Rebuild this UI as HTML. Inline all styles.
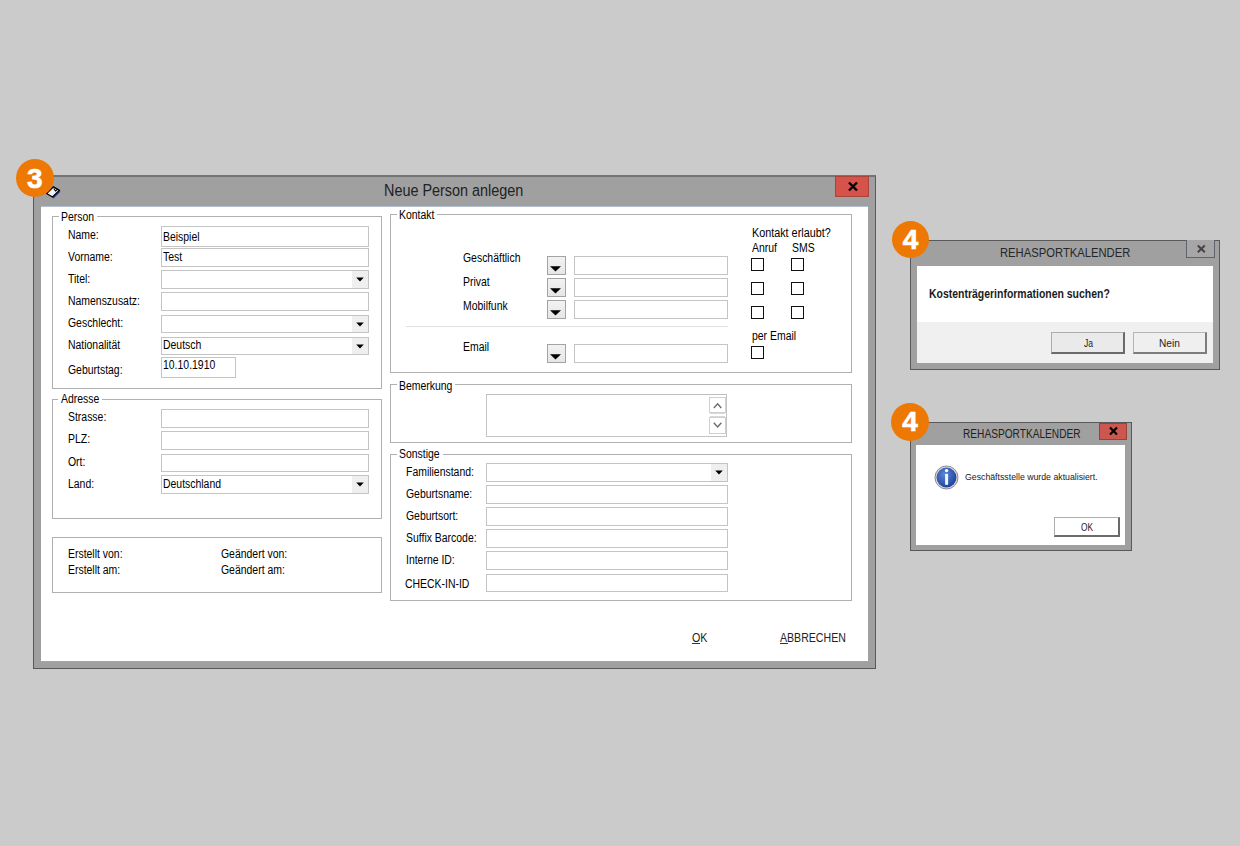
<!DOCTYPE html>
<html><head><meta charset="utf-8"><style>
html,body{margin:0;padding:0;}
body{width:1240px;height:846px;position:relative;overflow:hidden;background:#cbcbcb;font-family:"Liberation Sans", sans-serif;}
</style></head><body>
<div style="position:absolute;left:33px;top:175px;width:843px;height:494px;background:#a0a0a0;border:1px solid #595959;border-top:2px solid #747474;box-sizing:border-box;"></div>
<div style="position:absolute;left:41px;top:207px;width:827px;height:454px;background:#fff;"></div>
<div style="position:absolute;left:41px;top:206px;width:827px;height:1px;background:#b3bfcc;"></div>
<div style="position:absolute;left:41px;top:661px;width:827px;height:1px;background:#9aa6b2;"></div>
<div style="position:absolute;left:383.8px;top:183.26px;font-size:16px;line-height:16px;color:#222;font-weight:normal;white-space:nowrap;transform:scaleX(0.9);transform-origin:0 0;">Neue Person anlegen</div>
<div style="position:absolute;left:835px;top:176px;width:34px;height:21px;background:#d5534a;border:1px solid #a8443c;box-sizing:border-box;"></div>
<svg style="position:absolute;left:847px;top:181px" width="12" height="11"><path d="M2 1.5 L10 9.5 M10 1.5 L2 9.5" stroke="#000" stroke-width="2.4"/></svg>
<svg style="position:absolute;left:44px;top:184px" width="18" height="16"><path d="M2.5 9.5 L9.5 2.8 L15.5 6.3 L8.5 13 Z" fill="#f2f2f2" stroke="#000" stroke-width="1.4" stroke-linejoin="round"/><path d="M9.8 4.5 L11.5 7 L14 5" fill="none" stroke="#000" stroke-width="1.2"/><path d="M9 14 L16 7.3" stroke="#1c2c80" stroke-width="1.1"/></svg>
<div style="position:absolute;left:52px;top:216px;width:330px;height:173px;border:1px solid #b0b0b0;box-sizing:border-box;"></div>
<div style="position:absolute;left:58.7px;top:215px;width:38.5861px;height:3px;background:#fff;"></div>
<div style="position:absolute;left:61.2px;top:210.74px;font-size:12px;line-height:12px;color:#000;font-weight:normal;white-space:nowrap;transform:scaleX(0.87);transform-origin:0 0;">Person</div>
<div style="position:absolute;left:68px;top:228.64px;font-size:12px;line-height:12px;color:#000;font-weight:normal;white-space:nowrap;transform:scaleX(0.87);transform-origin:0 0;">Name:</div>
<div style="position:absolute;left:160.5px;top:226px;width:208.5px;height:20.5px;border:1px solid #c4c4c4;box-sizing:border-box;background:#fff;"></div>
<div style="position:absolute;left:162.5px;top:230.84px;font-size:12px;line-height:12px;color:#000;font-weight:normal;white-space:nowrap;transform:scaleX(0.87);transform-origin:0 0;">Beispiel</div>
<div style="position:absolute;left:68px;top:250.54px;font-size:12px;line-height:12px;color:#000;font-weight:normal;white-space:nowrap;transform:scaleX(0.87);transform-origin:0 0;">Vorname:</div>
<div style="position:absolute;left:160.5px;top:248.2px;width:208.5px;height:18.600000000000023px;border:1px solid #c4c4c4;box-sizing:border-box;background:#fff;"></div>
<div style="position:absolute;left:162.5px;top:250.54px;font-size:12px;line-height:12px;color:#000;font-weight:normal;white-space:nowrap;transform:scaleX(0.87);transform-origin:0 0;">Test</div>
<div style="position:absolute;left:68px;top:272.54px;font-size:12px;line-height:12px;color:#000;font-weight:normal;white-space:nowrap;transform:scaleX(0.87);transform-origin:0 0;">Titel:</div>
<div style="position:absolute;left:160.5px;top:270.2px;width:208.5px;height:18.600000000000023px;border:1px solid #c4c4c4;box-sizing:border-box;background:#fff;"></div>
<div style="position:absolute;left:352px;top:271.2px;width:16px;height:16.600000000000023px;background:#efefef;"></div>
<svg style="position:absolute;left:354.7px;top:277.1px" width="10" height="6"><path d="M1.2 0.4 L8.8 0.4 L5 4.6 Z" fill="#000"/></svg>
<div style="position:absolute;left:68px;top:294.64px;font-size:12px;line-height:12px;color:#000;font-weight:normal;white-space:nowrap;transform:scaleX(0.87);transform-origin:0 0;">Namenszusatz:</div>
<div style="position:absolute;left:160.5px;top:292.3px;width:208.5px;height:18.600000000000023px;border:1px solid #c4c4c4;box-sizing:border-box;background:#fff;"></div>
<div style="position:absolute;left:68px;top:316.94px;font-size:12px;line-height:12px;color:#000;font-weight:normal;white-space:nowrap;transform:scaleX(0.87);transform-origin:0 0;">Geschlecht:</div>
<div style="position:absolute;left:160.5px;top:314.6px;width:208.5px;height:18.600000000000023px;border:1px solid #c4c4c4;box-sizing:border-box;background:#fff;"></div>
<div style="position:absolute;left:352px;top:315.6px;width:16px;height:16.600000000000023px;background:#efefef;"></div>
<svg style="position:absolute;left:354.7px;top:321.50000000000006px" width="10" height="6"><path d="M1.2 0.4 L8.8 0.4 L5 4.6 Z" fill="#000"/></svg>
<div style="position:absolute;left:68px;top:338.94px;font-size:12px;line-height:12px;color:#000;font-weight:normal;white-space:nowrap;transform:scaleX(0.87);transform-origin:0 0;">Nationalität</div>
<div style="position:absolute;left:160.5px;top:336.6px;width:208.5px;height:18.600000000000023px;border:1px solid #c4c4c4;box-sizing:border-box;background:#fff;"></div>
<div style="position:absolute;left:352px;top:337.6px;width:16px;height:16.600000000000023px;background:#efefef;"></div>
<svg style="position:absolute;left:354.7px;top:343.50000000000006px" width="10" height="6"><path d="M1.2 0.4 L8.8 0.4 L5 4.6 Z" fill="#000"/></svg>
<div style="position:absolute;left:162.5px;top:338.94px;font-size:12px;line-height:12px;color:#000;font-weight:normal;white-space:nowrap;transform:scaleX(0.87);transform-origin:0 0;">Deutsch</div>
<div style="position:absolute;left:68px;top:363.84px;font-size:12px;line-height:12px;color:#000;font-weight:normal;white-space:nowrap;transform:scaleX(0.87);transform-origin:0 0;">Geburtstag:</div>
<div style="position:absolute;left:160.5px;top:357px;width:75px;height:21px;border:1px solid #c4c4c4;box-sizing:border-box;"></div>
<div style="position:absolute;left:162.5px;top:358.84px;font-size:12px;line-height:12px;color:#000;font-weight:normal;white-space:nowrap;transform:scaleX(0.87);transform-origin:0 0;">10.10.1910</div>
<div style="position:absolute;left:52px;top:398.5px;width:330px;height:120.5px;border:1px solid #b0b0b0;box-sizing:border-box;"></div>
<div style="position:absolute;left:58.3px;top:397.5px;width:43.8061px;height:3px;background:#fff;"></div>
<div style="position:absolute;left:60.8px;top:393.24px;font-size:12px;line-height:12px;color:#000;font-weight:normal;white-space:nowrap;transform:scaleX(0.87);transform-origin:0 0;">Adresse</div>
<div style="position:absolute;left:68px;top:411.34px;font-size:12px;line-height:12px;color:#000;font-weight:normal;white-space:nowrap;transform:scaleX(0.87);transform-origin:0 0;">Strasse:</div>
<div style="position:absolute;left:160.5px;top:409px;width:208.5px;height:18.5px;border:1px solid #c4c4c4;box-sizing:border-box;background:#fff;"></div>
<div style="position:absolute;left:68px;top:433.34px;font-size:12px;line-height:12px;color:#000;font-weight:normal;white-space:nowrap;transform:scaleX(0.87);transform-origin:0 0;">PLZ:</div>
<div style="position:absolute;left:160.5px;top:431px;width:208.5px;height:18.5px;border:1px solid #c4c4c4;box-sizing:border-box;background:#fff;"></div>
<div style="position:absolute;left:68px;top:455.84px;font-size:12px;line-height:12px;color:#000;font-weight:normal;white-space:nowrap;transform:scaleX(0.87);transform-origin:0 0;">Ort:</div>
<div style="position:absolute;left:160.5px;top:453.5px;width:208.5px;height:18.5px;border:1px solid #c4c4c4;box-sizing:border-box;background:#fff;"></div>
<div style="position:absolute;left:68px;top:477.64px;font-size:12px;line-height:12px;color:#000;font-weight:normal;white-space:nowrap;transform:scaleX(0.87);transform-origin:0 0;">Land:</div>
<div style="position:absolute;left:160.5px;top:475.3px;width:208.5px;height:18.5px;border:1px solid #c4c4c4;box-sizing:border-box;background:#fff;"></div>
<div style="position:absolute;left:352px;top:476.3px;width:16px;height:16.5px;background:#efefef;"></div>
<svg style="position:absolute;left:354.7px;top:482.15000000000003px" width="10" height="6"><path d="M1.2 0.4 L8.8 0.4 L5 4.6 Z" fill="#000"/></svg>
<div style="position:absolute;left:162.5px;top:477.64px;font-size:12px;line-height:12px;color:#000;font-weight:normal;white-space:nowrap;transform:scaleX(0.87);transform-origin:0 0;">Deutschland</div>
<div style="position:absolute;left:52px;top:536.5px;width:330px;height:56.5px;border:1px solid #b0b0b0;box-sizing:border-box;"></div>
<div style="position:absolute;left:68px;top:547.54px;font-size:12px;line-height:12px;color:#000;font-weight:normal;white-space:nowrap;transform:scaleX(0.87);transform-origin:0 0;">Erstellt von:</div>
<div style="position:absolute;left:68px;top:563.64px;font-size:12px;line-height:12px;color:#000;font-weight:normal;white-space:nowrap;transform:scaleX(0.87);transform-origin:0 0;">Erstellt am:</div>
<div style="position:absolute;left:221.2px;top:547.54px;font-size:12px;line-height:12px;color:#000;font-weight:normal;white-space:nowrap;transform:scaleX(0.87);transform-origin:0 0;">Geändert von:</div>
<div style="position:absolute;left:221.2px;top:563.64px;font-size:12px;line-height:12px;color:#000;font-weight:normal;white-space:nowrap;transform:scaleX(0.87);transform-origin:0 0;">Geändert am:</div>
<div style="position:absolute;left:390px;top:214px;width:461.5px;height:159px;border:1px solid #b0b0b0;box-sizing:border-box;"></div>
<div style="position:absolute;left:396.5px;top:213px;width:40.909px;height:3px;background:#fff;"></div>
<div style="position:absolute;left:399px;top:208.54px;font-size:12px;line-height:12px;color:#000;font-weight:normal;white-space:nowrap;transform:scaleX(0.87);transform-origin:0 0;">Kontakt</div>
<div style="position:absolute;left:462.5px;top:251.84px;font-size:12px;line-height:12px;color:#000;font-weight:normal;white-space:nowrap;transform:scaleX(0.87);transform-origin:0 0;">Geschäftlich</div>
<div style="position:absolute;left:547px;top:256px;width:19px;height:19px;border:1px solid #a3a3a3;box-sizing:border-box;background:linear-gradient(#f2f2f2,#e6e6e6);"></div>
<svg style="position:absolute;left:550px;top:265.5px" width="12" height="7"><path d="M0 0.2 L11 0.2 L5.5 5.5 Z" fill="#000"/></svg>
<div style="position:absolute;left:574px;top:256px;width:154px;height:18.5px;border:1px solid #c4c4c4;box-sizing:border-box;background:#fff;"></div>
<div style="position:absolute;left:462.5px;top:275.64px;font-size:12px;line-height:12px;color:#000;font-weight:normal;white-space:nowrap;transform:scaleX(0.87);transform-origin:0 0;">Privat</div>
<div style="position:absolute;left:547px;top:278px;width:19px;height:19px;border:1px solid #a3a3a3;box-sizing:border-box;background:linear-gradient(#f2f2f2,#e6e6e6);"></div>
<svg style="position:absolute;left:550px;top:287.5px" width="12" height="7"><path d="M0 0.2 L11 0.2 L5.5 5.5 Z" fill="#000"/></svg>
<div style="position:absolute;left:574px;top:278px;width:154px;height:18.5px;border:1px solid #c4c4c4;box-sizing:border-box;background:#fff;"></div>
<div style="position:absolute;left:462.5px;top:300.14px;font-size:12px;line-height:12px;color:#000;font-weight:normal;white-space:nowrap;transform:scaleX(0.87);transform-origin:0 0;">Mobilfunk</div>
<div style="position:absolute;left:547px;top:300.3px;width:19px;height:19px;border:1px solid #a3a3a3;box-sizing:border-box;background:linear-gradient(#f2f2f2,#e6e6e6);"></div>
<svg style="position:absolute;left:550px;top:309.8px" width="12" height="7"><path d="M0 0.2 L11 0.2 L5.5 5.5 Z" fill="#000"/></svg>
<div style="position:absolute;left:574px;top:300.3px;width:154px;height:18.5px;border:1px solid #c4c4c4;box-sizing:border-box;background:#fff;"></div>
<div style="position:absolute;left:462.5px;top:340.74px;font-size:12px;line-height:12px;color:#000;font-weight:normal;white-space:nowrap;transform:scaleX(0.87);transform-origin:0 0;">Email</div>
<div style="position:absolute;left:547px;top:344.3px;width:19px;height:19px;border:1px solid #a3a3a3;box-sizing:border-box;background:linear-gradient(#f2f2f2,#e6e6e6);"></div>
<svg style="position:absolute;left:550px;top:353.8px" width="12" height="7"><path d="M0 0.2 L11 0.2 L5.5 5.5 Z" fill="#000"/></svg>
<div style="position:absolute;left:574px;top:344.3px;width:154px;height:18.5px;border:1px solid #c4c4c4;box-sizing:border-box;background:#fff;"></div>
<div style="position:absolute;left:405.5px;top:325.5px;width:322.5px;height:1.2px;background:#e0e0e0;"></div>
<div style="position:absolute;left:751.5px;top:226.54px;font-size:12px;line-height:12px;color:#000;font-weight:normal;white-space:nowrap;transform:scaleX(0.9);transform-origin:0 0;">Kontakt erlaubt?</div>
<div style="position:absolute;left:751.5px;top:242.44px;font-size:12px;line-height:12px;color:#000;font-weight:normal;white-space:nowrap;transform:scaleX(0.87);transform-origin:0 0;">Anruf</div>
<div style="position:absolute;left:791.6px;top:242.44px;font-size:12px;line-height:12px;color:#000;font-weight:normal;white-space:nowrap;transform:scaleX(0.87);transform-origin:0 0;">SMS</div>
<div style="position:absolute;left:751.3px;top:258px;width:13px;height:13px;border:1.3px solid #111;box-sizing:border-box;background:#fff;"></div>
<div style="position:absolute;left:791.2px;top:258px;width:13px;height:13px;border:1.3px solid #111;box-sizing:border-box;background:#fff;"></div>
<div style="position:absolute;left:751.3px;top:282.2px;width:13px;height:13px;border:1.3px solid #111;box-sizing:border-box;background:#fff;"></div>
<div style="position:absolute;left:791.2px;top:282.2px;width:13px;height:13px;border:1.3px solid #111;box-sizing:border-box;background:#fff;"></div>
<div style="position:absolute;left:751.3px;top:306.2px;width:13px;height:13px;border:1.3px solid #111;box-sizing:border-box;background:#fff;"></div>
<div style="position:absolute;left:791.2px;top:306.2px;width:13px;height:13px;border:1.3px solid #111;box-sizing:border-box;background:#fff;"></div>
<div style="position:absolute;left:751.5px;top:330.44px;font-size:12px;line-height:12px;color:#000;font-weight:normal;white-space:nowrap;transform:scaleX(0.87);transform-origin:0 0;">per Email</div>
<div style="position:absolute;left:751.3px;top:345.8px;width:13px;height:13px;border:1.3px solid #111;box-sizing:border-box;background:#fff;"></div>
<div style="position:absolute;left:390px;top:384.2px;width:461.5px;height:58.80000000000001px;border:1px solid #b0b0b0;box-sizing:border-box;"></div>
<div style="position:absolute;left:396.5px;top:383.2px;width:58.900600000000004px;height:3px;background:#fff;"></div>
<div style="position:absolute;left:399px;top:380.04px;font-size:12px;line-height:12px;color:#000;font-weight:normal;white-space:nowrap;transform:scaleX(0.87);transform-origin:0 0;">Bemerkung</div>
<div style="position:absolute;left:486px;top:394.3px;width:241px;height:42.3px;border:1px solid #c4c4c4;border-top:1.5px solid #bdbdbd;box-sizing:border-box;background:#fff;"></div>
<div style="position:absolute;left:709.2px;top:396.6px;width:16.4px;height:16.4px;border:1px solid #cfcfcf;box-sizing:border-box;background:#fff;"></div>
<div style="position:absolute;left:709.2px;top:416.8px;width:16.4px;height:17px;border:1px solid #cfcfcf;box-sizing:border-box;background:#fff;"></div>
<div style="position:absolute;left:710px;top:412.8px;width:15px;height:1.2px;background:#d8d8d8;"></div>
<div style="position:absolute;left:710px;top:416px;width:15px;height:1.2px;background:#d8d8d8;"></div>
<svg style="position:absolute;left:711px;top:400px" width="14" height="12"><path d="M2.8 8 L6.6 3.8 L10.3 8" fill="none" stroke="#6c6c6c" stroke-width="1.4"/></svg>
<svg style="position:absolute;left:711px;top:419px" width="14" height="12"><path d="M2.8 3.8 L6.6 8 L10.3 3.8" fill="none" stroke="#6c6c6c" stroke-width="1.4"/></svg>
<div style="position:absolute;left:390px;top:453.5px;width:461.5px;height:147.5px;border:1px solid #b0b0b0;box-sizing:border-box;"></div>
<div style="position:absolute;left:396.5px;top:452.5px;width:46.129000000000005px;height:3px;background:#fff;"></div>
<div style="position:absolute;left:399px;top:448.14px;font-size:12px;line-height:12px;color:#000;font-weight:normal;white-space:nowrap;transform:scaleX(0.87);transform-origin:0 0;">Sonstige</div>
<div style="position:absolute;left:405.6px;top:465.74px;font-size:12px;line-height:12px;color:#000;font-weight:normal;white-space:nowrap;transform:scaleX(0.87);transform-origin:0 0;">Familienstand:</div>
<div style="position:absolute;left:486px;top:463.3px;width:242px;height:18.5px;border:1px solid #c4c4c4;box-sizing:border-box;background:#fff;"></div>
<div style="position:absolute;left:711px;top:464.3px;width:16px;height:16.5px;background:#efefef;"></div>
<svg style="position:absolute;left:713.7px;top:470.15000000000003px" width="10" height="6"><path d="M1.2 0.4 L8.8 0.4 L5 4.6 Z" fill="#000"/></svg>
<div style="position:absolute;left:405.6px;top:487.54px;font-size:12px;line-height:12px;color:#000;font-weight:normal;white-space:nowrap;transform:scaleX(0.87);transform-origin:0 0;">Geburtsname:</div>
<div style="position:absolute;left:486px;top:485.1px;width:242px;height:18.5px;border:1px solid #c4c4c4;box-sizing:border-box;background:#fff;"></div>
<div style="position:absolute;left:405.6px;top:509.84px;font-size:12px;line-height:12px;color:#000;font-weight:normal;white-space:nowrap;transform:scaleX(0.87);transform-origin:0 0;">Geburtsort:</div>
<div style="position:absolute;left:486px;top:507.4px;width:242px;height:18.5px;border:1px solid #c4c4c4;box-sizing:border-box;background:#fff;"></div>
<div style="position:absolute;left:405.6px;top:531.84px;font-size:12px;line-height:12px;color:#000;font-weight:normal;white-space:nowrap;transform:scaleX(0.87);transform-origin:0 0;">Suffix Barcode:</div>
<div style="position:absolute;left:486px;top:529.4px;width:242px;height:18.5px;border:1px solid #c4c4c4;box-sizing:border-box;background:#fff;"></div>
<div style="position:absolute;left:405.6px;top:553.84px;font-size:12px;line-height:12px;color:#000;font-weight:normal;white-space:nowrap;transform:scaleX(0.87);transform-origin:0 0;">Interne ID:</div>
<div style="position:absolute;left:486px;top:551.4px;width:242px;height:18.5px;border:1px solid #c4c4c4;box-sizing:border-box;background:#fff;"></div>
<div style="position:absolute;left:404.8px;top:578.44px;font-size:12px;line-height:12px;color:#000;font-weight:normal;white-space:nowrap;transform:scaleX(0.87);transform-origin:0 0;">CHECK-IN-ID</div>
<div style="position:absolute;left:486px;top:573.7px;width:242px;height:18.5px;border:1px solid #c4c4c4;box-sizing:border-box;background:#fff;"></div>
<div style="position:absolute;left:692.3px;top:631.79px;font-size:12.3px;line-height:12.3px;color:#222;font-weight:normal;white-space:nowrap;transform:scaleX(0.87);transform-origin:0 0;">OK</div>
<div style="position:absolute;left:692.3px;top:643.2px;width:7.6px;height:1.1px;background:#333;"></div>
<div style="position:absolute;left:780.2px;top:631.79px;font-size:12.3px;line-height:12.3px;color:#222;font-weight:normal;white-space:nowrap;transform:scaleX(0.86);transform-origin:0 0;">ABBRECHEN</div>
<div style="position:absolute;left:780.2px;top:643.2px;width:7.4px;height:1.1px;background:#333;"></div>
<div style="position:absolute;left:16.200000000000003px;top:159px;width:38px;height:38px;border-radius:50%;background:#ee7804;"></div>
<div style="position:absolute;left:15.900000000000002px;top:159.8px;width:38px;height:38px;line-height:38px;text-align:center;font-weight:bold;font-size:28px;color:#fff;-webkit-text-stroke:0.6px #fff;">3</div>
<div style="position:absolute;left:910px;top:239.5px;width:310px;height:130.5px;background:#a0a0a0;border:1px solid #595959;box-sizing:border-box;"></div>
<div style="position:absolute;left:916.5px;top:265.5px;width:296.8px;height:97.8px;background:#fff;"></div>
<div style="position:absolute;left:916.5px;top:322px;width:296.8px;height:41.3px;background:#f0f0f0;"></div>
<div style="position:absolute;left:999.6px;top:246.79px;font-size:12.3px;line-height:12.3px;color:#262626;font-weight:normal;white-space:nowrap;transform:scaleX(0.914);transform-origin:0 0;">REHASPORTKALENDER</div>
<div style="position:absolute;left:1186.2px;top:240px;width:28.6px;height:17.8px;border:1px solid #5f646b;border-top:none;box-sizing:border-box;background:#a6a6a6;"></div>
<svg style="position:absolute;left:1196px;top:244px" width="11" height="10"><path d="M1.8 1.5 L8.8 8.2 M8.8 1.5 L1.8 8.2" stroke="#444" stroke-width="2"/></svg>
<div style="position:absolute;left:929.2px;top:288.24px;font-size:12px;line-height:12px;color:#1c1c1c;font-weight:bold;white-space:nowrap;transform:scaleX(0.872);transform-origin:0 0;">Kostenträgerinformationen suchen?</div>
<div style="position:absolute;left:1050.7px;top:332px;width:74px;height:21.5px;border:1px solid #adadad;border-right:2px solid #6a6a6a;border-bottom:2px solid #6a6a6a;box-sizing:border-box;background:#eaeaea;"></div>
<div style="position:absolute;left:1083.5px;top:337.99px;font-size:11px;line-height:11px;color:#222;font-weight:normal;white-space:nowrap;transform:scaleX(0.78);transform-origin:0 0;">Ja</div>
<div style="position:absolute;left:1132.6px;top:332px;width:74.5px;height:22px;border:1px solid #b5b5b5;border-right:2px solid #7c7c7c;border-bottom:2px solid #7c7c7c;box-sizing:border-box;background:#efefef;"></div>
<div style="position:absolute;left:1158.8px;top:337.99px;font-size:11px;line-height:11px;color:#222;font-weight:normal;white-space:nowrap;transform:scaleX(0.92);transform-origin:0 0;">Nein</div>
<div style="position:absolute;left:892.0px;top:220.5px;width:37.0px;height:37.0px;border-radius:50%;background:#ee7804;"></div>
<div style="position:absolute;left:892.0px;top:220.5px;width:37.0px;height:37.0px;line-height:37.0px;text-align:center;font-weight:bold;font-size:28px;color:#fff;-webkit-text-stroke:0.6px #fff;">4</div>
<div style="position:absolute;left:910px;top:422px;width:222px;height:129px;background:#a0a0a0;border:1px solid #595959;box-sizing:border-box;"></div>
<div style="position:absolute;left:916.3px;top:445px;width:208.7px;height:100px;background:#fff;"></div>
<div style="position:absolute;left:962.7px;top:428.34px;font-size:12px;line-height:12px;color:#222;font-weight:normal;white-space:nowrap;transform:scaleX(0.845);transform-origin:0 0;">REHASPORTKALENDER</div>
<div style="position:absolute;left:1098.8px;top:422.7px;width:28.5px;height:17px;background:#cb574e;border:1px solid #9c4038;box-sizing:border-box;"></div>
<svg style="position:absolute;left:1107.7px;top:425.7px" width="12" height="10"><path d="M2 1.5 L9 8.5 M9 1.5 L2 8.5" stroke="#000" stroke-width="2.2"/></svg>
<svg style="position:absolute;left:934px;top:465px" width="25" height="25"><defs><radialGradient id="ig" cx="0.4" cy="0.35" r="0.7"><stop offset="0" stop-color="#5a86d8"/><stop offset="1" stop-color="#1c3f9a"/></radialGradient></defs><circle cx="12.5" cy="12.5" r="11.5" fill="#ddd" stroke="#888" stroke-width="1"/><circle cx="12.5" cy="12.5" r="10" fill="url(#ig)"/><rect x="11.1" y="8.8" width="3" height="11" fill="#f4f4f4"/><circle cx="12.6" cy="5.6" r="1.7" fill="#fff"/></svg>
<div style="position:absolute;left:964.6px;top:472.16px;font-size:9.5px;line-height:9.5px;color:#1a1a1a;font-weight:normal;white-space:nowrap;transform:scaleX(0.92);transform-origin:0 0;">Geschäftsstelle wurde aktualisiert.</div>
<div style="position:absolute;left:1053.7px;top:517.4px;width:66px;height:19.2px;border:1px solid #adadad;border-right:2px solid #6a6a6a;border-bottom:2px solid #6a6a6a;box-sizing:border-box;background:#fff;"></div>
<div style="position:absolute;left:1080.6px;top:522.01px;font-size:10.5px;line-height:10.5px;color:#222;font-weight:normal;white-space:nowrap;transform:scaleX(0.79);transform-origin:0 0;">OK</div>
<div style="position:absolute;left:891px;top:403px;width:38px;height:38px;border-radius:50%;background:#ee7804;"></div>
<div style="position:absolute;left:891px;top:403px;width:38px;height:38px;line-height:38px;text-align:center;font-weight:bold;font-size:28px;color:#fff;-webkit-text-stroke:0.6px #fff;">4</div>
</body></html>
